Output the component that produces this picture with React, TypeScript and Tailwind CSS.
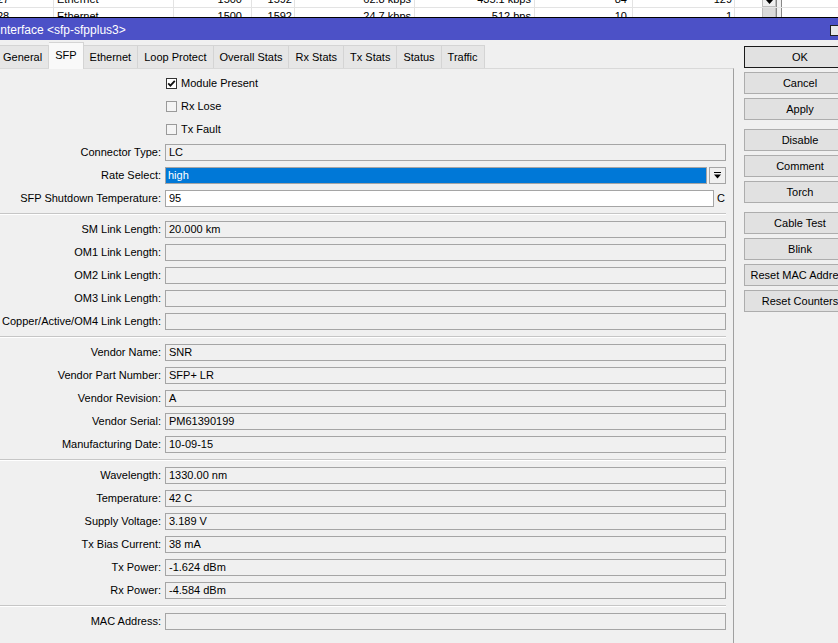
import React from "react";

type Row =
  | { kind: "field"; label: string; value?: string }
  | { kind: "sep" };

const groupA: Row[] = [
  { kind: "field", label: "SM Link Length:", value: "20.000 km" },
  { kind: "field", label: "OM1 Link Length:" },
  { kind: "field", label: "OM2 Link Length:" },
  { kind: "field", label: "OM3 Link Length:" },
  { kind: "field", label: "Copper/Active/OM4 Link Length:" },
];
const groupB: Row[] = [
  { kind: "field", label: "Vendor Name:", value: "SNR" },
  { kind: "field", label: "Vendor Part Number:", value: "SFP+ LR" },
  { kind: "field", label: "Vendor Revision:", value: "A" },
  { kind: "field", label: "Vendor Serial:", value: "PM61390199" },
  { kind: "field", label: "Manufacturing Date:", value: "10-09-15" },
];
const groupC: Row[] = [
  { kind: "field", label: "Wavelength:", value: "1330.00 nm" },
  { kind: "field", label: "Temperature:", value: "42 C" },
  { kind: "field", label: "Supply Voltage:", value: "3.189 V" },
  { kind: "field", label: "Tx Bias Current:", value: "38 mA" },
  { kind: "field", label: "Tx Power:", value: "-1.624 dBm" },
  { kind: "field", label: "Rx Power:", value: "-4.584 dBm" },
];

function Label({ text }: { text: string }) {
  return (
    <div className="w-[161px] shrink-0 text-right whitespace-nowrap">{text}</div>
  );
}

function Field({ label, value }: { label: string; value?: string }) {
  return (
    <div className="flex items-center h-[17px] mb-[6px]">
      <Label text={label} />
      <div className="ml-[4px] flex-1 h-[17px] border border-[#a5a5a5] px-[3px] leading-[15px] whitespace-nowrap">
        {value ?? ""}
      </div>
    </div>
  );
}

function Sep() {
  return (
    <div className="mt-[1px] mb-[6px] h-[2px] border-t border-[#c6c6c6] border-b border-b-white" />
  );
}

function Check({ label, checked }: { label: string; checked?: boolean }) {
  return (
    <div className="flex items-center h-[17px] mb-[6px]">
      <div className="w-[166px] shrink-0" />
      <div
        className={
          checked
            ? "w-[11px] h-[11px] border border-[#333333] bg-white flex items-center justify-center"
            : "w-[11px] h-[11px] border border-[#9a9a9a] bg-[#f4f4f4]"
        }
      >
        {checked && (
          <svg width="9" height="9" viewBox="0 0 9 9">
            <path d="M1.2 4.4 L3.4 6.6 L7.8 1.8" fill="none" stroke="#111" strokeWidth="1.8" />
          </svg>
        )}
      </div>
      <div className="ml-[4px] whitespace-nowrap">{label}</div>
    </div>
  );
}

function Group({ rows }: { rows: Row[] }) {
  return (
    <>
      {rows.map((r, i) =>
        r.kind === "field" ? <Field key={i} label={r.label} value={r.value} /> : <Sep key={i} />
      )}
    </>
  );
}

const tabs = [
  "General",
  "SFP",
  "Ethernet",
  "Loop Protect",
  "Overall Stats",
  "Rx Stats",
  "Tx Stats",
  "Status",
  "Traffic",
];

const buttonGroups = [
  ["OK", "Cancel", "Apply"],
  ["Disable", "Comment", "Torch"],
  ["Cable Test", "Blink", "Reset MAC Address", "Reset Counters"],
];

const tableRows = [
  ["27", "Ethernet", "1500", "1592", "62.8 kbps", "435.1 kbps", "84", "129"],
  ["28", "Ethernet", "1500", "1592", "24.7 kbps", "512 bps", "10", "1"],
];

function TableRow({ cells, first }: { cells: string[]; first: boolean }) {
  return (
    <div className="flex h-[17px] border-b border-[#e3e3e3] leading-[16px]">
      <div className="w-[54px] shrink-0 border-r border-[#e3e3e3] overflow-hidden">
        <span className="-ml-[3px] inline-block">{cells[0]}</span>
      </div>
      <div className="w-[120px] shrink-0 border-r border-[#e3e3e3] pl-[3px]">{cells[1]}</div>
      <div className="w-[78px] shrink-0 border-r border-[#e3e3e3] text-right pr-[9px]">{cells[2]}</div>
      <div className="w-[43px] shrink-0 border-r border-[#e3e3e3] text-right pr-[2px]">{cells[3]}</div>
      <div className="w-[120px] shrink-0 border-r border-[#e3e3e3] text-right pr-[3px]">{cells[4]}</div>
      <div className="w-[120px] shrink-0 border-r border-[#e3e3e3] text-right pr-[3px]">{cells[5]}</div>
      <div className="w-[98px] shrink-0 border-r border-[#e3e3e3] text-right pr-[5px]">{cells[6]}</div>
      <div className="w-[102px] shrink-0 border-r border-[#e3e3e3] text-right pr-[2px]">{cells[7]}</div>
      <div className="w-[27px] shrink-0" />
      <div
        className={
          first
            ? "w-[14px] shrink-0 bg-[#f0f0f0] border border-[#bdbdbd] flex items-end justify-center pb-[2px]"
            : "w-[14px] shrink-0 bg-[#dadada] border-x border-[#bdbdbd]"
        }
      >
        {first && (
          <svg width="7" height="6" viewBox="0 0 7 6">
            <path d="M0 0 H7 V1 H0 Z M0 2 H7 L3.5 6 Z" fill="#000" />
          </svg>
        )}
      </div>
      <div className="w-[6px] shrink-0 border-x border-[#888888] bg-[#f0f0f0]" />
      <div className="flex-1" />
    </div>
  );
}

export default function App() {
  return (
    <div className="w-[838px] h-[643px] overflow-hidden bg-[#f0f0f0] text-[11px] text-black font-['Liberation_Sans',Arial,sans-serif]">
      {/* background table strip */}
      <div className="h-[18px] overflow-hidden bg-white border-b border-black">
        <div className="-mt-[9px]">
          {tableRows.map((r, i) => (
            <TableRow key={i} cells={r} first={i === 0} />
          ))}
        </div>
      </div>

      {/* title bar */}
      <div className="h-[22px] bg-[#4c51c7] flex items-center text-white text-[12px] overflow-hidden">
        <span className="-ml-[3px] whitespace-nowrap flex-1 pt-[1px]">Interface &lt;sfp-sfpplus3&gt;</span>
        <div className="w-[12px] h-[11px] border border-[#222] bg-[#e8e8e8] shrink-0 -mr-[4px] mt-[2px]" />
      </div>

      {/* body */}
      <div className="flex h-[603px]">
        <div className="w-[734px] shrink-0 flex flex-col">
          {/* tabs */}
          <div className="h-[28px] flex items-end shrink-0 -ml-[3px]">
            {tabs.map((t) =>
              t === "SFP" ? (
                <div
                  key={t}
                  className="h-[27px] -mb-[1px] relative z-10 px-[6px] bg-[#f9f9f9] border-t border-r border-[#d4d4d4] flex items-center whitespace-nowrap pb-[2px]"
                >
                  {t}
                </div>
              ) : (
                <div
                  key={t}
                  className="h-[23px] px-[6px] bg-[#e6e6e6] border-t border-r border-[#d4d4d4] flex items-center whitespace-nowrap"
                >
                  {t}
                </div>
              )
            )}
          </div>
          {/* panel */}
          <div className="flex-1 border-t border-[#d9d9d9] border-r border-r-[#a0a0a0] pt-[6px] pr-[7px]">
            <Check label="Module Present" checked />
            <Check label="Rx Lose" />
            <Check label="Tx Fault" />
            <Field label="Connector Type:" value="LC" />
            <div className="flex items-center h-[17px] mb-[6px]">
              <Label text="Rate Select:" />
              <div className="ml-[4px] flex-1 h-[17px] border border-[#a5a5a5] bg-[#0078d7] text-white px-[2px] leading-[15px]">
                high
              </div>
              <div className="ml-[2px] w-[17px] h-[17px] border border-[#a5a5a5] flex items-center justify-center">
                <svg width="7" height="7" viewBox="0 0 7 7">
                  <path d="M0 0 H7 V1 H0 Z M0 2.5 H7 L3.5 6.5 Z" fill="#000" />
                </svg>
              </div>
            </div>
            <div className="flex items-center h-[17px] mb-[6px]">
              <Label text="SFP Shutdown Temperature:" />
              <div className="ml-[4px] flex-1 h-[17px] border border-[#a5a5a5] bg-white px-[3px] leading-[15px]">
                95
              </div>
              <div className="w-[12px] pl-[3px]">C</div>
            </div>
            <Sep />
            <Group rows={groupA} />
            <Sep />
            <Group rows={groupB} />
            <Sep />
            <Group rows={groupC} />
            <Sep />
            <Field label="MAC Address:" />
          </div>
        </div>

        {/* buttons */}
        <div className="pl-[10px] pt-[6px] flex flex-col gap-[9px]">
          {buttonGroups.map((g, gi) => (
            <div key={gi} className="flex flex-col gap-[4px]">
              {g.map((b) => (
                <div
                  key={b}
                  className={
                    b === "OK"
                      ? "w-[112px] h-[22px] border border-[#1a1a1a] bg-[#e1e1e1] flex items-center justify-center whitespace-nowrap"
                      : "w-[112px] h-[22px] border border-[#adadad] bg-[#e1e1e1] flex items-center justify-center whitespace-nowrap"
                  }
                >
                  {b}
                </div>
              ))}
            </div>
          ))}
        </div>
      </div>
    </div>
  );
}
